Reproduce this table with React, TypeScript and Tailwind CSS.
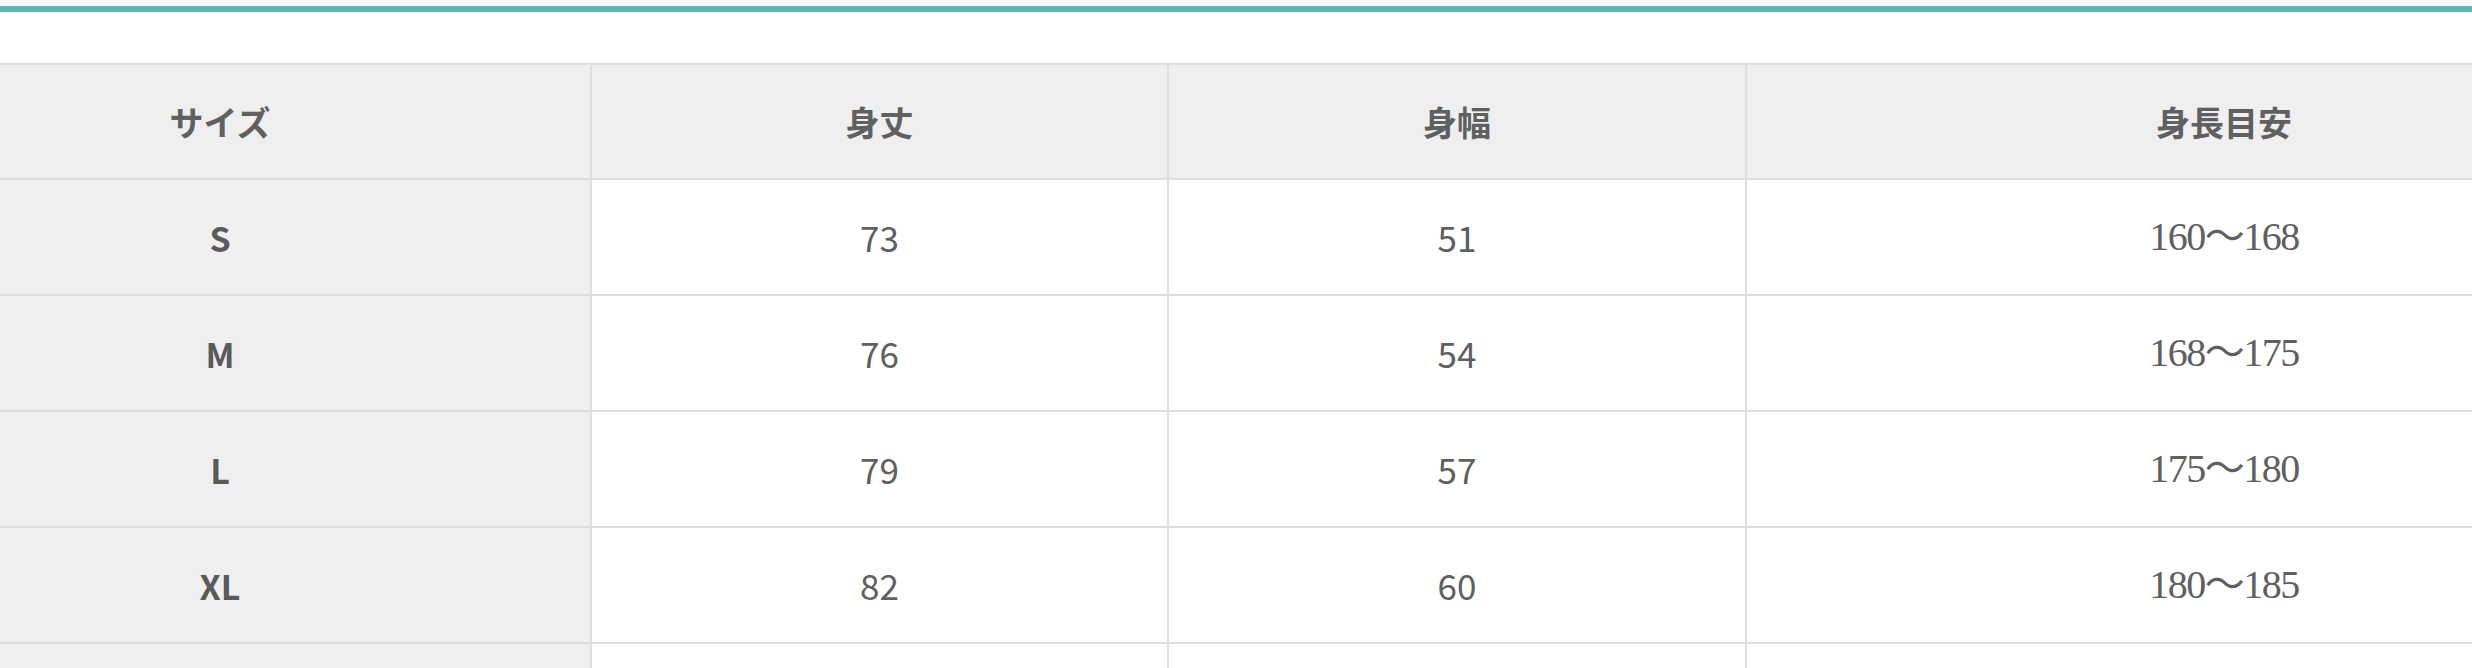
const rows = [
  { size: 'S', length: '73', width: '51', height: '160～168' },
  { size: 'M', length: '76', width: '54', height: '168～175' },
  { size: 'L', length: '79', width: '57', height: '175～180' },
  { size: 'XL', length: '82', width: '60', height: '180～185' },
]

const sans = 'font-["Noto_Sans_CJK_JP","Noto_Sans",sans-serif]'

export default function App() {
  return (
    <div className="w-full h-[668px] overflow-hidden bg-white">
      {/* accent bar */}
      <div className="h-[6px] bg-[#f8f8f8]" />
      <div className="h-[6px] bg-[#5db8b1]" />

      <div className="pt-[51px]">
        <table className={`-ml-[152px] w-[2853px] table-fixed border-collapse ${sans} text-[#606060]`}>
          <colgroup>
            <col className="w-[742px]" />
            <col className="w-[577px]" />
            <col className="w-[578px]" />
            <col className="w-[956px]" />
          </colgroup>
          <thead>
            <tr className="h-[115px] bg-[#efefef]">
              <th className="border-2 border-[#dedede] text-[34px] font-bold">サイズ</th>
              <th className="border-2 border-[#dedede] text-[34px] font-bold">身丈</th>
              <th className="border-2 border-[#dedede] text-[34px] font-bold">身幅</th>
              <th className="border-2 border-[#dedede] text-[34px] font-bold">身長目安</th>
            </tr>
          </thead>
          <tbody>
            {rows.map((r) => (
              <tr key={r.size} className="h-[116px]">
                <td className="border-2 border-[#dedede] bg-[#efefef] text-center text-[34px] font-bold text-[#5a5a5a]">
                  {r.size}
                </td>
                <td className="border-2 border-[#dedede] text-center text-[35px] font-normal">{r.length}</td>
                <td className="border-2 border-[#dedede] text-center text-[35px] font-normal">{r.width}</td>
                <td className='border-2 border-[#dedede] text-center text-[40px] tracking-[-1.5px] font-["Liberation_Serif","Noto_Sans_CJK_JP",serif]'>
                  {r.height}
                </td>
              </tr>
            ))}
            {/* next row continues below the fold */}
            <tr className="h-[116px]">
              <td className="border-2 border-[#dedede] bg-[#efefef]" />
              <td className="border-2 border-[#dedede]" />
              <td className="border-2 border-[#dedede]" />
              <td className="border-2 border-[#dedede]" />
            </tr>
          </tbody>
        </table>
      </div>
    </div>
  )
}
